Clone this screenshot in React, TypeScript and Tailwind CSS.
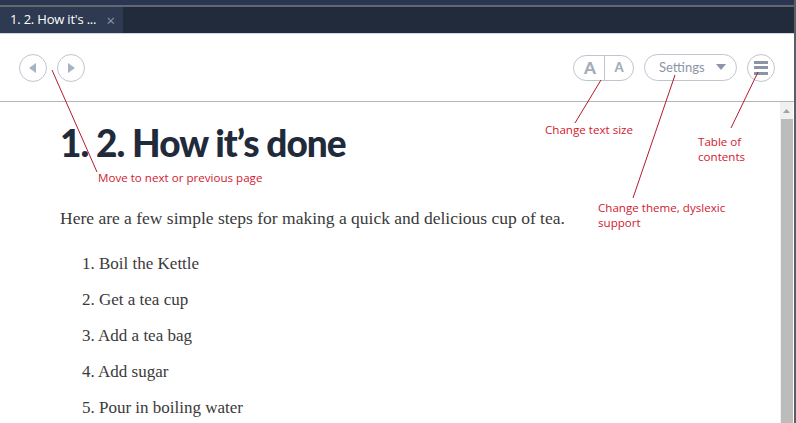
import React from "react";

const red = "text-[#d1202f]";

function Circle({ children }: { children: React.ReactNode }) {
  return (
    <div className="w-[28px] h-[28px] rounded-full border border-[#bfc4ce] flex items-center justify-center">
      {children}
    </div>
  );
}

export default function App() {
  return (
    <div className="w-[796px] h-[423px] overflow-hidden relative flex bg-white" style={{ fontFamily: '"Open Sans", sans-serif' }}>
      <div className="flex-1 flex flex-col min-w-0">
        <div className="h-[5px] bg-[#2b3652]" />
        <div className="h-[2px] bg-[#62666e]" />
        <div className="h-[26px] bg-[#222b3c] flex">
          <div className="w-[123px] bg-[#2d3a51] flex items-center pl-[10px] pr-[8px] justify-between">
            <span className="text-[13px] text-white tracking-[-0.2px]">1. 2. How it's ...</span>
            <span className="text-[15px] text-[#8c95a7] leading-none">×</span>
          </div>
        </div>
        <div className="h-px bg-[#cdd5e3]" />
        <div className="h-[67px] border-b border-[#b4b4b4] flex items-center px-[19px] box-content">
          <div className="flex gap-[10px] items-center">
            <Circle>
              <svg width="10" height="12" viewBox="0 0 10 12"><path d="M1 6 L8 1 L8 11 Z" fill="#a8b2c6" /></svg>
            </Circle>
            <Circle>
              <svg width="10" height="12" viewBox="0 0 10 12"><path d="M9 6 L2 1 L2 11 Z" fill="#a8b2c6" /></svg>
            </Circle>
          </div>
          <div className="flex-1" />
          <div className="flex items-center">
            <div className="w-[61px] h-[26px] rounded-full border border-[#bfc4ce] flex items-center">
              <span className="w-[30px] text-center font-bold text-[17px] text-[#a3abbb] leading-none pl-[2px]" style={{ fontFamily: '"Lato", sans-serif', fontWeight: 900 }}>A</span>
              <span className="w-px h-[25px] bg-[#bfc4ce]" />
              <span className="flex-1 text-center font-bold text-[13px] text-[#a3abbb] leading-none" style={{ fontFamily: '"Lato", sans-serif', fontWeight: 900 }}>A</span>
            </div>
            <div className="ml-[10px] w-[93px] h-[27px] rounded-full border border-[#bfc4ce] flex items-center pl-[14px]">
              <span className="text-[13px] text-[#8c95a7] leading-none" style={{ fontFamily: '"Lato", sans-serif' }}>Settings</span>
              <svg className="ml-[11px]" width="10" height="7" viewBox="0 0 10 7"><path d="M0 0 L10 0 L5 6 Z" fill="#8c95a7" /></svg>
            </div>
            <div className="ml-[10px] w-[28px] h-[28px] rounded-full border border-[#bfc4ce] flex flex-col items-center justify-center gap-[2.5px]">
              <span className="block w-[14px] h-[3px] bg-[#8c95a7]" />
              <span className="block w-[14px] h-[3px] bg-[#8c95a7]" />
              <span className="block w-[14px] h-[3px] bg-[#8c95a7]" />
            </div>
          </div>
        </div>
        <div className="flex-1 flex min-h-0">
          <div className="flex-1 pl-[60px] pt-[19px]">
            <h1 className="text-[37px] leading-[44px] text-[#1f2a3b] tracking-[-1px]" style={{ fontFamily: '"Lato", sans-serif', fontWeight: 900 }}>
              1. 2. How it’s done
            </h1>
            <p className="mt-[41px] text-[17.5px] leading-[24px] text-[#3a3a3a]" style={{ fontFamily: '"Liberation Serif", serif' }}>
              Here are a few simple steps for making a quick and delicious cup of tea.
            </p>
            <ol className="mt-[22px] pl-[22px] text-[17px] leading-[24px] text-[#3a3a3a] flex flex-col gap-[12px]" style={{ fontFamily: '"Liberation Serif", serif' }}>
              <li>1. Boil the Kettle</li>
              <li>2. Get a tea cup</li>
              <li>3. Add a tea bag</li>
              <li>4. Add sugar</li>
              <li>5. Pour in boiling water</li>
            </ol>
          </div>
          <div className="w-[13px] bg-[#f0f0f0] flex flex-col items-center mr-[1px]">
            <div className="h-[17px] flex items-center justify-center">
              <svg width="7" height="4" viewBox="0 0 7 4"><path d="M0 4 L3.5 0 L7 4 Z" fill="#a3a3a3" /></svg>
            </div>
            <div className="flex-1 w-[12px] bg-[#bcbcbc]" />
          </div>
        </div>
      </div>
      <div className="w-[2px] bg-[#5a5e66]" />

      <svg className="absolute inset-0 pointer-events-none" width="796" height="423">
        <g stroke="#b31b2d" strokeWidth="1" fill="none">
          <line x1="52" y1="70" x2="97" y2="172" />
          <line x1="601" y1="80" x2="575" y2="123" />
          <line x1="675" y1="75" x2="633" y2="198" />
          <line x1="758" y1="72" x2="731" y2="128" />
        </g>
      </svg>
      <div className={`absolute left-[98px] top-[170px] text-[11.6px] leading-[16px] ${red}`}>Move to next or previous page</div>
      <div className={`absolute left-[545px] top-[122px] text-[11.6px] leading-[16px] ${red}`}>Change text size</div>
      <div className={`absolute left-[698px] top-[134px] text-[11.6px] leading-[15px] ${red} flex flex-col`}>
        <span>Table of</span>
        <span>contents</span>
      </div>
      <div className={`absolute left-[598px] top-[200px] text-[11.6px] leading-[15px] ${red} flex flex-col`}>
        <span>Change theme, dyslexic</span>
        <span>support</span>
      </div>
    </div>
  );
}
